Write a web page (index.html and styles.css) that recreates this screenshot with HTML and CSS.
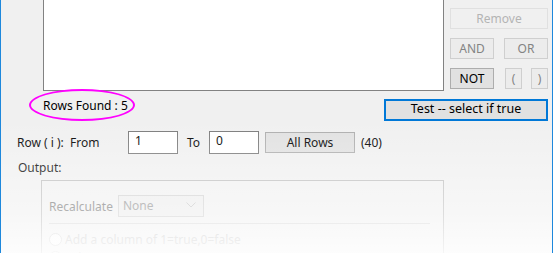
FILE: index.html
```html
<!DOCTYPE html>
<html lang="en">
<head>
    <meta charset="UTF-8">
    <title>Set Row Selection</title>
    <link rel="stylesheet" href="styles.css">
</head>
<body>

<div class="dialog">
    <div class="top">
        <div class="condition"></div>
        <div class="ops">
            <button class="btn btn-remove" disabled>Remove</button>
            <div class="ops-row">
                <button class="btn btn-op dim">AND</button>
                <button class="btn btn-op dim">OR</button>
            </div>
            <div class="ops-row">
                <button class="btn btn-op">NOT</button>
                <div class="parens">
                    <button class="btn btn-paren dim">(</button>
                    <button class="btn btn-paren dim">)</button>
                </div>
            </div>
        </div>
    </div>

    <div class="found-row">
        <span class="found">Rows Found : 5</span>
        <button class="btn btn-test">Test -- select if true</button>
    </div>

    <div class="range-row">
        <span class="range-label">Row ( i ):&nbsp; From</span>
        <input class="num" type="text" value="1">
        <span class="to">To</span>
        <input class="num" type="text" value="0">
        <button class="btn btn-all">All Rows</button>
        <span class="count">(40)</span>
    </div>

    <div class="output-label">Output:</div>

    <div class="group">
        <div class="recalc">
            <span>Recalculate</span>
            <div class="select">None <svg width="10" height="6" viewBox="0 0 10 6"><path d="M0.5 0.5 L5 5 L9.5 0.5" fill="none" stroke="#c4c4c4" stroke-width="1"/></svg></div>
        </div>
        <div class="sep"></div>
        <label class="radio"><span class="dot"></span>Add a column of 1=true,0=false</label>
        <label class="radio"><span class="dot"></span>Select rows</label>
    </div>

    <div class="fade"></div>
</div>

</body>
</html>
```

FILE: styles.css
```css
body {
    margin: 0;
    background: #ffffff;
    font-family: 'Noto Sans', sans-serif;
    font-size: 12px;
    color: #000;
}

.dialog {
    position: relative;
    width: 551px;
    height: 253px;
    overflow: hidden;
    background: #f0f0f0;
    border-left: 1px solid #1e88dc;
    border-right: 1px solid #1e88dc;
}

.btn {
    font-family: inherit;
    font-size: 12px;
    background: #e1e1e1;
    border: 1px solid #adadad;
    padding: 0;
    margin: 0;
    color: #000;
    line-height: 1;
}

.dim {
    background: #ececec;
    border-color: #cfcfcf;
    color: #838383;
}

/* condition box + operator buttons */
.top {
    display: flex;
    align-items: flex-start;
}

.condition {
    margin-left: 42px;
    width: 399px;
    height: 90px;
    background: #fff;
    border: 1px solid #828282;
    border-top: none;
}

.ops {
    margin-left: 6px;
    padding-top: 8px;
    display: flex;
    flex-direction: column;
    gap: 9px;
}

.btn-remove {
    width: 98px;
    height: 21px;
    background: #f0f0f0;
    border-color: #e0e0e0;
    color: #b4b4b4;
}

.ops-row {
    display: flex;
    justify-content: space-between;
    width: 98px;
}

.btn-op {
    width: 44px;
    height: 21px;
}

.parens {
    display: flex;
    gap: 9px;
}

.btn-paren {
    width: 17px;
    height: 21px;
}

/* rows found / test */
.found-row {
    display: flex;
    align-items: center;
    height: 30px;
}

.found {
    position: relative;
    margin-left: 42px;
    margin-top: -2px;
}

.found::before {
    content: "";
    position: absolute;
    left: -14px;
    top: -8px;
    width: 102px;
    height: 28px;
    border: 2px solid #ff00ff;
    border-radius: 50%;
}

.btn-test {
    margin-left: auto;
    margin-right: 4px;
    margin-top: 7px;
    width: 164px;
    height: 22px;
    border: 2px solid #0078d7;
    font-size: 12.5px;
}

/* row range */
.range-row {
    display: flex;
    align-items: center;
    margin-top: 10px;
    height: 23px;
}

.range-label {
    margin-left: 16px;
    width: 111px;
}

.num {
    box-sizing: border-box;
    width: 50px;
    height: 23px;
    border: 1px solid #7a7a7a;
    background: #fff;
    color: #000;
    font-family: inherit;
    font-size: 12px;
    padding: 0 0 4px 6px;
    margin: 0;
}

.to {
    margin-left: 9px;
    width: 22px;
}

.btn-all {
    margin-left: 6px;
    width: 90px;
    height: 21px;
}

.count {
    margin-left: 6px;
}

.output-label {
    margin-left: 17px;
    margin-top: 5px;
    height: 20px;
}

/* output group */
.group {
    margin-left: 40px;
    margin-top: 1px;
    width: 394px;
    height: 90px;
    border: 1px solid #bcbcbc;
    padding: 14px 0 0 7px;
    color: #6d6d6d;
}

.recalc {
    display: flex;
    align-items: center;
    gap: 5px;
}

.select {
    box-sizing: border-box;
    width: 86px;
    height: 22px;
    border: 1px solid #cfcfcf;
    background: #ececec;
    color: #8a8a8a;
    display: flex;
    align-items: center;
    justify-content: space-between;
    padding: 0 7px 2px 4px;
}

.sep {
    width: 381px;
    height: 1px;
    background: #d4d4d4;
    margin: 6px 0 8px;
}

.radio {
    display: flex;
    align-items: center;
    height: 14px;
    margin-bottom: 4px;
    color: #bdbdbd;
}

.dot {
    width: 13px;
    height: 13px;
    border: 1px solid #cfcfcf;
    border-radius: 50%;
    box-sizing: border-box;
    margin-right: 3px;
    background: #fafafa;
}

/* bottom fade of the screenshot */
.fade {
    position: absolute;
    left: -1px;
    right: -1px;
    top: 0;
    bottom: 0;
    pointer-events: none;
    background: linear-gradient(to bottom,
        rgba(255, 255, 255, 0) 0px,
        rgba(255, 255, 255, 0) 120px,
        rgba(255, 255, 255, 0.5) 215px,
        rgba(255, 255, 255, 0.85) 253px);
}
```
